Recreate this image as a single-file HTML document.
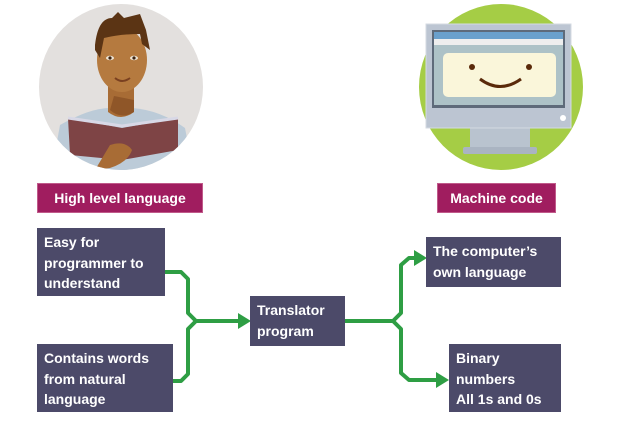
<!DOCTYPE html>
<html><head><style>
html,body{margin:0;padding:0;background:#fff;}
body{width:634px;height:435px;position:relative;overflow:hidden;font-family:"Liberation Sans",Arial,sans-serif;}
.lab{position:absolute;background:#a01d5f;color:#fff;font-weight:bold;font-size:14px;line-height:29px;text-align:center;border:1px solid #c05a8a;box-sizing:border-box;}
.box{position:absolute;background:#4c4a69;color:#fff;font-weight:bold;font-size:14px;line-height:20.5px;padding:4px 7px;box-sizing:border-box;}
svg{position:absolute;left:0;top:0;}
</style></head><body>
<svg width="634" height="435" viewBox="0 0 634 435">
  <defs><clipPath id="c1"><ellipse cx="121" cy="87" rx="82" ry="83"/></clipPath></defs>
  <ellipse cx="121" cy="87" rx="82" ry="83" fill="#e3e0de"/>
  <g clip-path="url(#c1)">
    <path d="M60 125 Q90 108 110 108 L132 108 Q160 110 185 128 L195 180 L50 180 Z" fill="#bccbd8"/>
    <path d="M108 80 L134 80 L134 112 Q121 122 108 112 Z" fill="#a86c35"/>
    <path d="M114 96 L134 100 L134 112 Q121 120 110 110 Z" fill="#8f5628"/>
    <ellipse cx="122" cy="60" rx="25" ry="32" fill="#b57a3f"/>
    <path d="M95 45 Q98 18 112 18 L118 12 L124 18 L140 14 L146 30 L150 50 L142 44 L140 34 Q120 34 104 38 L100 58 L95 50 Z" fill="#5b3414"/>
    <ellipse cx="110" cy="58" rx="4" ry="2.2" fill="#efe6d6"/><circle cx="110" cy="58" r="1.6" fill="#3a2110"/>
    <ellipse cx="134" cy="58" rx="4" ry="2.2" fill="#efe6d6"/><circle cx="134" cy="58" r="1.6" fill="#3a2110"/>
    <path d="M115 78 Q122 84 130 78" stroke="#7a4020" stroke-width="2" fill="none"/>
    <path d="M68 118 L122 128 L178 118 L178 150 L122 160 L70 155 Z" fill="#7e4445"/>
    <path d="M68 118 L122 126 L178 118" stroke="#d8d8e6" stroke-width="3" fill="none"/>
    <path d="M110 145 Q125 140 132 150 Q128 162 110 168 L95 170 Z" fill="#a86c35"/>
  </g>
  <ellipse cx="501" cy="87" rx="82" ry="83" fill="#a5cd45"/>
  <rect x="470" y="120" width="60" height="30" fill="#b9c3cf"/>
  <rect x="463" y="147" width="74" height="7" rx="2" fill="#aab4c2"/>
  <rect x="426" y="24" width="145" height="104" fill="#bcc5d2" stroke="#d4dae2"/>
  <rect x="432" y="30" width="133" height="78" fill="#5e6a7a"/>
  <rect x="434" y="32" width="129" height="7" fill="#6aa0cc"/>
  <rect x="434" y="39" width="129" height="6" fill="#eeeeee"/>
  <rect x="434" y="45" width="129" height="60" fill="#adc2c7"/>
  <rect x="443" y="53" width="113" height="44" rx="5" fill="#faf6da"/>
  <circle cx="472" cy="67" r="3" fill="#5a2a0a"/><circle cx="529" cy="67" r="3" fill="#5a2a0a"/>
  <path d="M480 79 Q500 94 521 79" stroke="#5a2a0a" stroke-width="3" fill="none"/>
  <circle cx="563" cy="118" r="3" fill="#fff"/>
  <g stroke="#2e9e44" stroke-width="4" fill="none" stroke-linejoin="round">
    <path d="M165 272 L181 272 L188 279 L188 313 L196 321 L240 321"/>
    <path d="M173 381 L181 381 L188 374 L188 329 L196 321"/>
    <path d="M344 321 L393 321 L401 313 L401 265 L409 258 L418 258"/>
    <path d="M393 321 L401 329 L401 373 L409 380 L440 380"/>
  </g>
  <g fill="#2e9e44">
    <path d="M238 313 L251 321 L238 329 Z"/>
    <path d="M414 250 L427 258 L414 266 Z"/>
    <path d="M436 372 L449 380 L436 388 Z"/>
  </g>
</svg>
<div class="lab" style="left:37px;top:183px;width:166px;height:30px;">High level language</div>
<div class="lab" style="left:437px;top:183px;width:119px;height:30px;">Machine code</div>
<div class="box" style="left:37px;top:228px;width:128px;height:68px;">Easy for<br>programmer to<br>understand</div>
<div class="box" style="left:37px;top:344px;width:136px;height:68px;">Contains words<br>from natural<br>language</div>
<div class="box" style="left:250px;top:296px;width:95px;height:50px;">Translator<br>program</div>
<div class="box" style="left:426px;top:237px;width:135px;height:50px;">The computer’s<br>own language</div>
<div class="box" style="left:449px;top:344px;width:112px;height:68px;">Binary<br>numbers<br>All 1s and 0s</div>
</body></html>
